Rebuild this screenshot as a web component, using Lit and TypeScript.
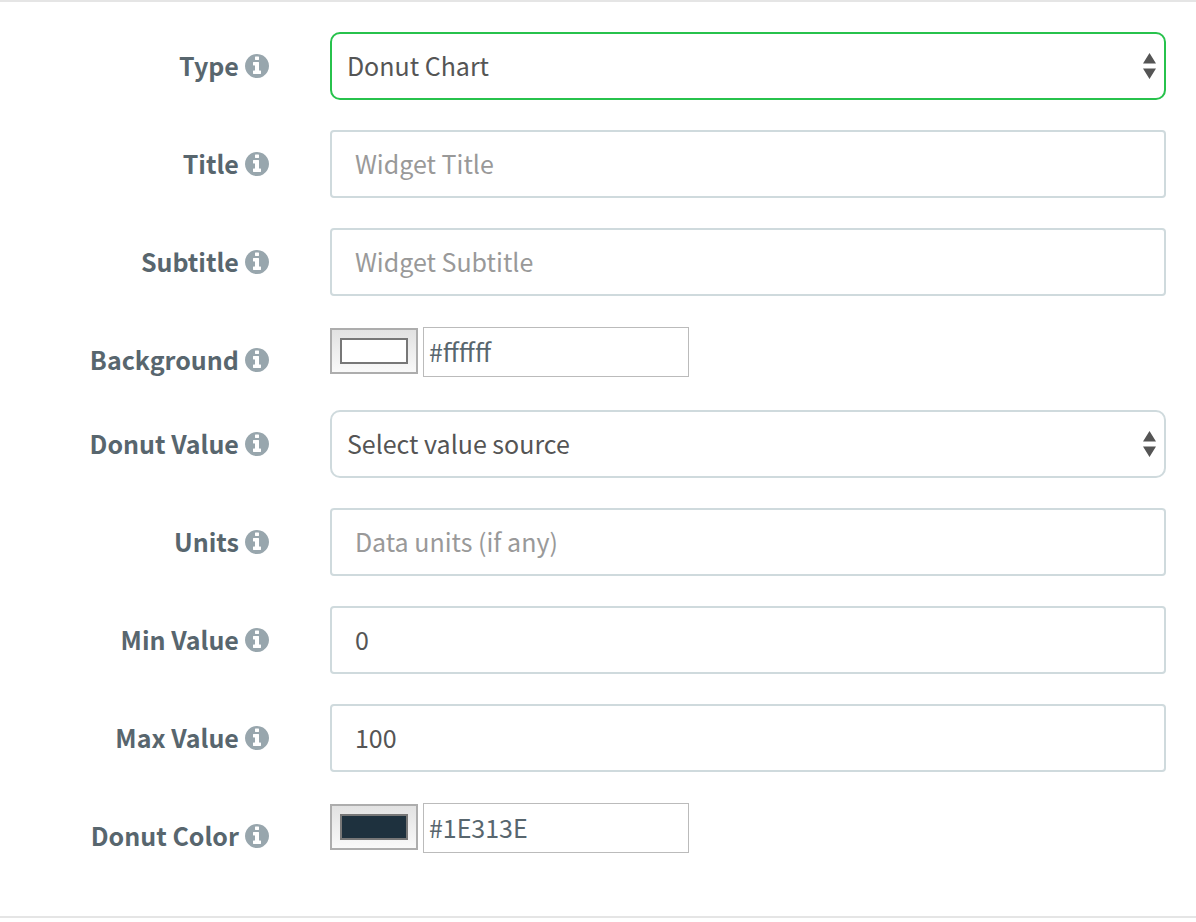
import { LitElement, html, css, svg, TemplateResult } from "lit";
import { customElement } from "lit/decorators.js";

type Field =
  | { kind: "select"; id: string; label: string; options: string[]; active?: boolean }
  | { kind: "text"; id: string; label: string; value?: string; placeholder?: string }
  | { kind: "color"; id: string; label: string; value: string };

const FIELDS: Field[] = [
  { kind: "select", id: "type", label: "Type", options: ["Donut Chart"], active: true },
  { kind: "text", id: "title", label: "Title", placeholder: "Widget Title" },
  { kind: "text", id: "subtitle", label: "Subtitle", placeholder: "Widget Subtitle" },
  { kind: "color", id: "background", label: "Background", value: "#ffffff" },
  { kind: "select", id: "donut-value", label: "Donut Value", options: ["Select value source"] },
  { kind: "text", id: "units", label: "Units", placeholder: "Data units (if any)" },
  { kind: "text", id: "min", label: "Min Value", value: "0" },
  { kind: "text", id: "max", label: "Max Value", value: "100" },
  { kind: "color", id: "donut-color", label: "Donut Color", value: "#1E313E" },
];

const infoIcon = svg`<path d="M1024 1248v-160q0-14-9-23t-23-9h-96v-512q0-14-9-23t-23-9h-320q-14 0-23 9t-9 23v160q0 14 9 23t23 9h96v320h-96q-14 0-23 9t-9 23v160q0 14 9 23t23 9h448q14 0 23-9t9-23zm-128-896v-160q0-14-9-23t-23-9h-192q-14 0-23 9t-9 23v160q0 14 9 23t23 9h192q14 0 23-9t9-23zm640 416q0 209-103 385.5t-279.5 279.5-385.5 103-385.5-103-279.5-279.5-103-385.5 103-385.5 279.5-279.5 385.5-103 385.5 103 279.5 279.5 103 385.5z"/>`;

@customElement("app-root")
export class AppRoot extends LitElement {
  static styles = css`
    :host {
      display: block;
      background: #fff;
      color: #58666e;
      font-family: "Noto Sans CJK SC", "Noto Sans", sans-serif;
      font-size: 25px;
    }
    * {
      box-sizing: border-box;
    }
    .form {
      display: flex;
      flex-direction: column;
      gap: 30px;
      padding: 30px 30px 60px;
      border-top: 2px solid #e5e5e5;
      border-bottom: 2px solid #e5e5e5;
    }
    .row {
      display: grid;
      grid-template-columns: minmax(0, 2fr) minmax(0, 7fr);
      column-gap: 61px;
      align-items: start;
    }
    .label {
      display: flex;
      justify-content: flex-end;
      align-items: center;
      gap: 6px;
      padding-top: 14px;
      line-height: 38px;
      font-weight: 700;
      white-space: nowrap;
    }
    .label-text {
      padding-bottom: 2px;
    }
    .info {
      width: 24px;
      height: 24px;
      flex: none;
      fill: #98a6ad;
    }
    .control {
      display: block;
      width: 100%;
      height: 68px;
      margin: 0;
      padding: 0 23px 2px;
      border: 2px solid #cfdadd;
      border-radius: 4px;
      background: #fff;
      color: #555;
      font: inherit;
      outline: none;
    }
    .control::placeholder {
      color: #999;
      opacity: 1;
    }
    .picker {
      display: grid;
      align-items: center;
    }
    .picker > * {
      grid-area: 1 / 1;
    }
    .picker .control {
      appearance: none;
      padding: 0 15px 2px;
      border-radius: 10px;
    }
    .picker .active {
      border-color: #27c24c;
    }
    .arrows {
      justify-self: end;
      width: 14px;
      height: 26px;
      margin-right: 9px;
      fill: #555;
      pointer-events: none;
    }
    .color {
      display: flex;
      align-items: flex-start;
      gap: 5px;
      height: 54px;
      padding-top: 1px;
    }
    .swatch {
      appearance: none;
      width: 88px;
      height: 46px;
      margin: 1px 0 0;
      padding: 0;
      border: 2px solid #adadad;
      border-radius: 0;
      background: linear-gradient(#e2e2e2, #f9f9f9);
    }
    .swatch::-webkit-color-swatch-wrapper {
      padding: 8px;
    }
    .swatch::-webkit-color-swatch {
      border: 2px solid #777;
      border-radius: 0;
    }
    .hex {
      width: 266px;
      height: 50px;
      margin: 0;
      padding: 0 5px 2px;
      border: 1px solid #bbb;
      border-radius: 0;
      background: #fff;
      color: inherit;
      font: inherit;
      outline: none;
    }
  `;

  private renderControl(f: Field): TemplateResult {
    if (f.kind === "select") {
      return html`<div class="picker">
        <select id=${f.id} class=${f.active ? "control active" : "control"}>
          ${f.options.map((o) => html`<option>${o}</option>`)}
        </select>
        <svg class="arrows" viewBox="0 0 14 26" aria-hidden="true">
          <path d="M6.5 0 13 10.6H0ZM6.5 26 0 15.4H13Z" />
        </svg>
      </div>`;
    }
    if (f.kind === "color") {
      return html`<div class="color">
        <input
          class="swatch"
          type="color"
          aria-label="${f.label} swatch"
          .value=${f.value.toLowerCase()}
        />
        <input id=${f.id} class="hex" type="text" .value=${f.value} />
      </div>`;
    }
    return html`<input
      id=${f.id}
      class="control"
      type="text"
      placeholder=${f.placeholder ?? ""}
      .value=${f.value ?? ""}
    />`;
  }

  render() {
    return html`<form class="form">
      ${FIELDS.map(
        (f) => html`<div class="row">
          <label class="label" for=${f.id}>
            <span class="label-text">${f.label}</span>
            <svg class="info" viewBox="0 0 1536 1536" aria-hidden="true">${infoIcon}</svg>
          </label>
          ${this.renderControl(f)}
        </div>`
      )}
    </form>`;
  }
}
